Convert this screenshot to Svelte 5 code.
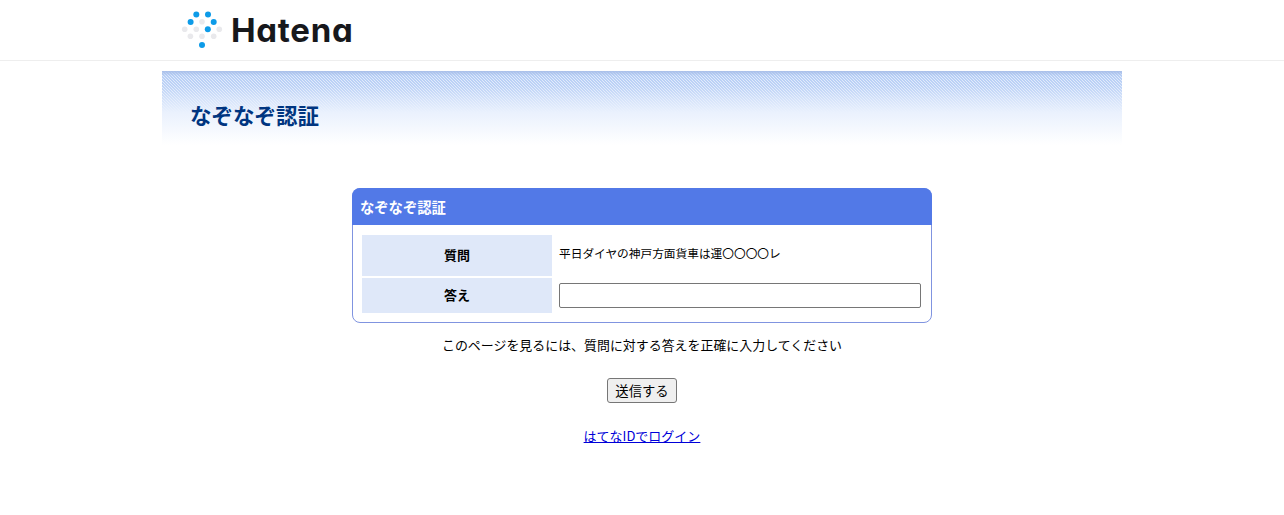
<script>
  let answer = '';
  const question = '平日ダイヤの神戸方面貨車は運〇〇〇〇レ';

  // logo dots: [cx, cy, blue?]
  const dots = [
    [196.3, 14.5, true], [208, 14.5, true],
    [190.6, 22, true], [202, 21.8, false], [213.7, 22, true],
    [184.7, 29.3, false], [196.3, 29.3, false], [207.8, 29.3, true], [219.3, 29.3, false],
    [190.4, 36.3, false], [202, 36.3, false], [213.7, 36.3, false],
    [202, 45, true]
  ];
</script>

<header class="top">
  <div class="top-inner">
    <a class="logo" href="#top">
      <svg width="44" height="44" viewBox="180 8 44 44" aria-hidden="true">
        {#each dots as [cx, cy, blue]}
          <circle {cx} {cy} r={blue ? 3 : 2.8} fill={blue ? '#0d9be8' : '#e9e9ec'} />
        {/each}
      </svg>
      <span class="word">Hatena</span>
    </a>
  </div>
</header>

<main class="page">
  <div class="banner">
    <h1>なぞなぞ認証</h1>
  </div>

  <form class="form" on:submit|preventDefault>
    <div class="box">
      <h2>なぞなぞ認証</h2>
      <table>
        <tbody>
          <tr class="q">
            <th>質問</th>
            <td><span class="question">{question}</span></td>
          </tr>
          <tr class="a">
            <th>答え</th>
            <td><input type="text" bind:value={answer} /></td>
          </tr>
        </tbody>
      </table>
    </div>
    <p class="note">このページを見るには、質問に対する答えを正確に入力してください</p>
    <button type="submit">送信する</button>
    <a class="login" href="#login">はてなIDでログイン</a>
  </form>
</main>

<style>
  :global(body) {
    margin: 0;
    background: #fff;
    color: #000;
    font-family: "Noto Sans CJK JP", "Noto Sans", sans-serif;
  }

  .top {
    height: 60px;
    border-bottom: 1px solid #eeeeee;
  }

  .top-inner {
    width: 960px;
    margin: 0 auto;
  }

  .logo {
    display: flex;
    align-items: center;
    gap: 7px;
    height: 60px;
    padding-left: 18px;
    text-decoration: none;
    color: #17181c;
  }

  .word {
    font-family: Inter, sans-serif;
    font-size: 33px;
    font-weight: 700;
    letter-spacing: 0.7px;
    font-feature-settings: "cv11";
  }

  .page {
    width: 960px;
    margin: 10px auto 0;
  }

  .banner {
    height: 74px;
    background:
      linear-gradient(to bottom, #a9bfe9 0, rgba(169, 191, 233, 0) 5px),
      linear-gradient(to bottom, rgba(234, 241, 253, 0) 0, rgba(234, 241, 253, 0.15) 20%, rgba(234, 241, 253, 0.65) 40%, #eaf1fd 56%, #fff 100%),
      linear-gradient(45deg, #b5cdf5 0 16.67%, #e0eafb 16.67% 50%, #b5cdf5 50% 66.67%, #e0eafb 66.67% 100%) 0 0 / 3px 3px;
    box-sizing: border-box;
    padding: 29px 0 0 28px;
  }

  h1 {
    margin: 0;
    font-size: 21.5px;
    line-height: 30px;
    font-weight: 700;
    color: #003580;
  }

  .form {
    display: flex;
    flex-direction: column;
    align-items: center;
    margin-top: 43px;
  }

  .box {
    width: 580px;
    box-sizing: border-box;
    border: 1px solid #8094e0;
    border-radius: 8px;
  }

  h2 {
    margin: -1px -1px 0;
    height: 37px;
    padding-left: 8px;
    border-radius: 8px 8px 0 0;
    background: #5279e7;
    color: #fff;
    font-size: 14.3px;
    line-height: 37px;
    font-weight: 700;
  }

  table {
    width: 560px;
    margin: 10px 0 9px 9px;
    border-collapse: collapse;
  }

  th {
    width: 190px;
    padding: 0 0 2px;
    background: #dfe8f9;
    font-size: 13px;
    font-weight: 700;
    text-align: center;
  }

  td {
    padding: 0 0 0 7px;
    font-size: 11.7px;
    vertical-align: top;
  }

  .q th { height: 39px; border-bottom: 2px solid #fff; }
  .a th { height: 33px; }

  .question {
    display: block;
    line-height: 18px;
    padding-top: 9px;
  }

  input {
    display: block;
    width: 362px;
    height: 25px;
    box-sizing: border-box;
    margin-top: 6px;
    border: 1px solid #767676;
    border-radius: 2px;
    padding: 1px 2px;
  }

  .note {
    margin: 12px 0 0;
    font-size: 12.95px;
    line-height: 20px;
  }

  button {
    margin-top: 23px;
    width: 70px;
    height: 25px;
    padding: 0;
    box-sizing: border-box;
    border: 1px solid #767676;
    border-radius: 3px;
    background: #efefef;
    color: #000;
    font-family: inherit;
    font-size: 13.33px;
    line-height: 1;
  }

  .login {
    margin-top: 23px;
    font-size: 13px;
    line-height: 20px;
    color: #0000d8;
  }
</style>
